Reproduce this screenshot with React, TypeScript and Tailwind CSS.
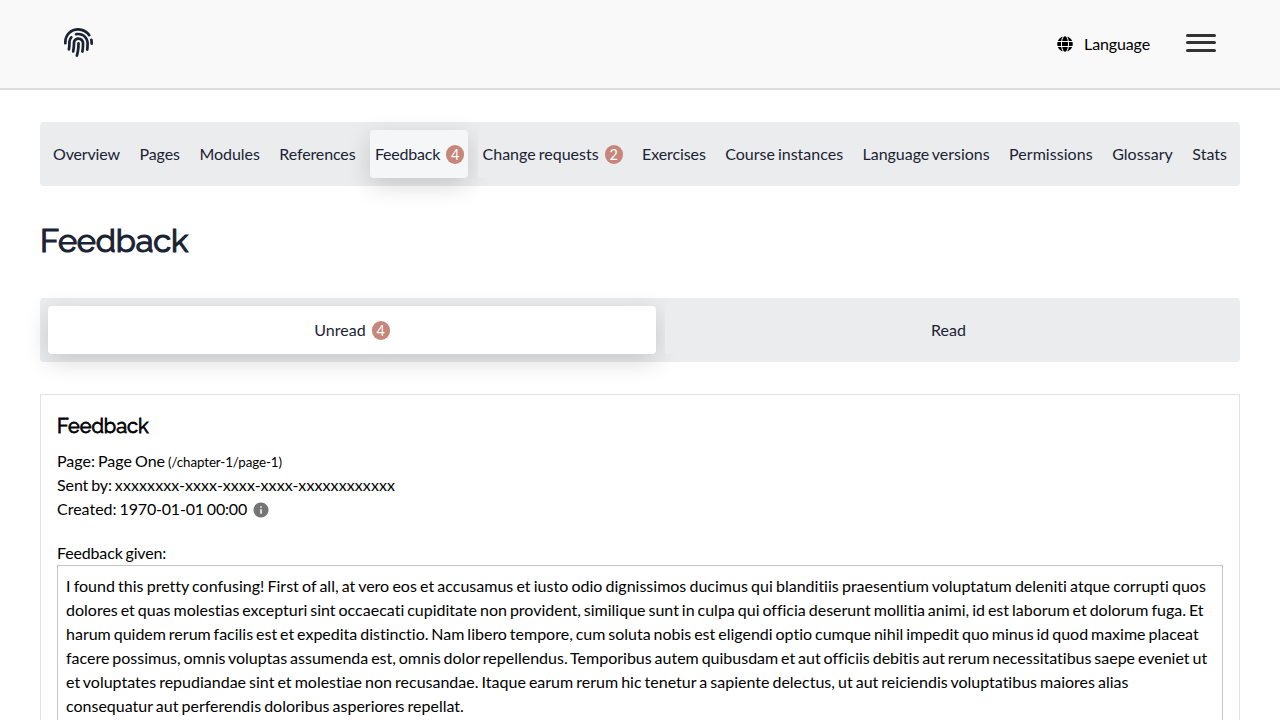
import { FaFingerprint, FaGlobe } from "react-icons/fa";
import { MdInfo } from "react-icons/md";

type Tab = { label: string; count?: number; active?: boolean; tracking?: string };

const TABS: Tab[] = [
  { label: "Overview", tracking: "tracking-[-0.15px]" },
  { label: "Pages", tracking: "tracking-[-0.05px]" },
  { label: "Modules", tracking: "tracking-[-0.05px]" },
  { label: "References", tracking: "tracking-[-0.12px]" },
  { label: "Feedback", count: 4, active: true, tracking: "tracking-[-0.22px]" },
  { label: "Change requests", count: 2 },
  { label: "Exercises", tracking: "tracking-[-0.1px]" },
  { label: "Course instances" },
  { label: "Language versions", tracking: "tracking-[-0.03px]" },
  { label: "Permissions", tracking: "tracking-[0.05px]" },
  { label: "Glossary", tracking: "tracking-[0.05px]" },
  { label: "Stats" },
];

const MESSAGE = [
  {
    spacing: "[word-spacing:-0.9px]",
    text: "I found this pretty confusing! First of all, at vero eos et accusamus et iusto odio dignissimos ducimus qui blanditiis praesentium voluptatum deleniti atque corrupti quos ",
  },
  {
    spacing: "[word-spacing:-1.15px]",
    text: "dolores et quas molestias excepturi sint occaecati cupiditate non provident, similique sunt in culpa qui officia deserunt mollitia animi, id est laborum et dolorum fuga. Et ",
  },
  {
    spacing: "[word-spacing:-1.2px]",
    text: "harum quidem rerum facilis est et expedita distinctio. Nam libero tempore, cum soluta nobis est eligendi optio cumque nihil impedit quo minus id quod maxime placeat ",
  },
  {
    spacing: "[word-spacing:-1.22px]",
    text: "facere possimus, omnis voluptas assumenda est, omnis dolor repellendus. Temporibus autem quibusdam et aut officiis debitis aut rerum necessitatibus saepe eveniet ut ",
  },
  {
    spacing: "[word-spacing:-1.04px]",
    text: "et voluptates repudiandae sint et molestiae non recusandae. Itaque earum rerum hic tenetur a sapiente delectus, ut aut reiciendis voluptatibus maiores alias consequatur aut perferendis doloribus asperiores repellat.",
  },
];

function Badge({ count }: { count: number }) {
  return (
    <span className="ml-1.5 flex h-[19px] w-[18px] items-center justify-center rounded-full bg-[#c68679] pt-0.5 text-[14.4px] leading-none tracking-normal text-white">
      {count}
    </span>
  );
}

function Header() {
  return (
    <header className="flex h-[90px] items-start justify-between border-b-2 border-[#dedede] bg-[#f9f9f9] px-16">
      <FaFingerprint className="mt-7 size-[29px] text-[#1a2333]" />
      <div className="flex">
        <button className="mt-8 flex h-6 items-center text-base tracking-[-0.13px] text-black">
          <FaGlobe className="mr-[11px] size-4" />
          Language
        </button>
        <button aria-label="Menu" className="mt-[34px] ml-9 flex w-[30px] flex-col">
          <span className="h-[3px] w-full rounded-full bg-[#333]" />
          <span className="mt-1 h-[3px] w-full rounded-full bg-[#333]" />
          <span className="mt-[5px] h-[3px] w-full rounded-full bg-[#333]" />
        </button>
      </div>
    </header>
  );
}

export default function App() {
  return (
    <div className="h-[720px] overflow-hidden bg-white font-['Lato',sans-serif] text-base leading-6 text-black [font-variant-ligatures:none] [word-spacing:-1.05px]">
      <Header />
      <main className="px-10 pt-8">
        <nav className="flex h-16 justify-between rounded bg-[#ebecee] p-2 text-[#1a2333]">
          {TABS.map((tab) => (
            <a
              key={tab.label}
              className={
                tab.active
                  ? "flex items-center rounded bg-[#f5f6f7] pr-1 pl-[5px] whitespace-nowrap shadow-[0_7px_25px_rgba(0,0,0,0.16)]"
                  : tab.count
                    ? "relative flex items-center bg-[#ebecee] px-[5px] whitespace-nowrap"
                    : "flex items-center px-[5px] whitespace-nowrap"
              }
            >
              <span className={tab.tracking}>{tab.label}</span>
              {tab.count && <Badge count={tab.count} />}
            </a>
          ))}
        </nav>

        <h1 className="mt-8 font-['Raleway','Lato',sans-serif] text-[32.5px] leading-[46px] font-normal tracking-[-0.15px] text-[#1a2333] [-webkit-text-stroke:1.2px_#1a2333]">
          Feedback
        </h1>

        <div className="mt-[34px] flex h-16 gap-[9px] rounded bg-[#ebecee] p-2 text-[#1a2333]">
          <a className="flex w-[608px] items-center justify-center rounded bg-white shadow-[0_7px_25px_rgba(0,0,0,0.16)]">
            Unread
            <Badge count={4} />
          </a>
          <a className="relative flex flex-1 items-center justify-center bg-[#ebecee]">Read</a>
        </div>

        <section className="mt-8 h-[400px] border border-[#e2e2e2] p-4">
          <h2 className="font-['Raleway','Lato',sans-serif] text-[20px] leading-[30px] font-normal tracking-[-0.05px] [-webkit-text-stroke:0.8px_black]">
            Feedback
          </h2>
          <div className="mt-2 h-6">
            Page: Page One <span className="text-[13.33px] tracking-[-0.1px]">(/chapter-1/page-1)</span>
          </div>
          <div>
            <span className="tracking-[-0.1px]">Sent by: </span>
            <span className="tracking-[0.1px]">xxxxxxxx-xxxx-xxxx-xxxx-xxxxxxxxxxxx</span>
          </div>
          <div className="flex items-center">
            <span>
              Created: <span className="tracking-[-0.18px]">1970-01-01 00:00</span>
            </span>
            <MdInfo className="mt-0.5 ml-[5px] size-[18px] text-[#757575]" />
          </div>
          <div className="mt-5 tracking-[-0.16px]">Feedback given:</div>
          <p className="h-[300px] border border-[#c4c4c4] p-2">
            {MESSAGE.map((part) => (
              <span key={part.text} className={part.spacing}>
                {part.text}
              </span>
            ))}
          </p>
        </section>
      </main>
    </div>
  );
}
